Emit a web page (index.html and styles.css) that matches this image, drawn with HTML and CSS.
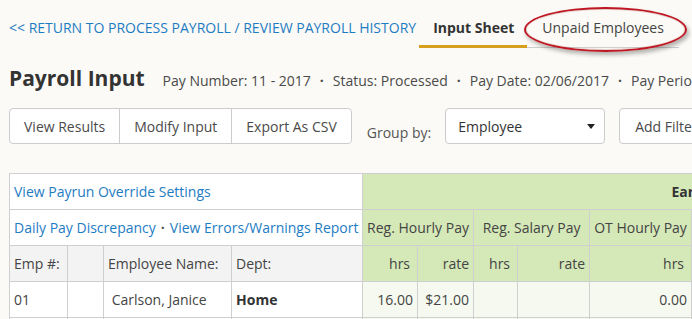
FILE: index.html
```html
<!DOCTYPE html>
<html>
<head>
<meta charset="utf-8">
<link rel="stylesheet" href="styles.css">
</head>
<body>
<div class="page">
  <div class="topbar">
    <a class="back" href="#">&lt;&lt; RETURN TO PROCESS PAYROLL / REVIEW PAYROLL HISTORY</a>
    <nav class="tabs">
      <a class="tab active" href="#">Input Sheet</a>
      <a class="tab" href="#">Unpaid Employees</a>
      <span class="annot"></span>
    </nav>
  </div>

  <div class="titlebar">
    <h1>Payroll Input</h1>
    <div class="meta">Pay Number: 11 - 2017<span class="sep">·</span>Status: Processed<span class="sep">·</span>Pay Date: 02/06/2017<span class="sep">·</span>Pay Period: 01/23/2017 - 02/05/2017</div>
  </div>

  <div class="toolbar">
    <div class="btn-group">
      <a class="btn" href="#">View Results</a>
      <a class="btn" href="#">Modify Input</a>
      <a class="btn" href="#">Export As CSV</a>
    </div>
    <span class="label">Group by:</span>
    <div class="select">Employee<span class="caret"></span></div>
    <a class="btn single" href="#">Add Filter</a>
  </div>

  <table class="grid">
    <colgroup>
      <col class="c-emp"><col class="c-blank"><col class="c-name"><col class="c-dept">
      <col class="c-h1"><col class="c-r1"><col class="c-h2"><col class="c-r2"><col class="c-h3">
      <col class="c-x"><col class="c-x"><col class="c-y">
    </colgroup>
    <tr>
      <td colspan="4" class="white"><a href="#">View Payrun Override Settings</a></td>
      <th colspan="8" class="green earn">Earnings</th>
    </tr>
    <tr>
      <td colspan="4" class="white"><a href="#">Daily Pay Discrepancy</a><span class="dot">·</span><a href="#">View Errors/Warnings Report</a></td>
      <th colspan="2" class="green">Reg. Hourly Pay</th>
      <th colspan="2" class="green">Reg. Salary Pay</th>
      <th class="green">OT Hourly Pay</th>
      <th colspan="2" class="green">OT Salary Pay</th>
      <th class="green">Bonus</th>
    </tr>
    <tr>
      <th class="gray">Emp #:</th>
      <th class="gray"></th>
      <th class="gray">Employee Name:</th>
      <th class="gray">Dept:</th>
      <th class="green num hrs">hrs</th>
      <th class="green num">rate</th>
      <th class="green num hrs">hrs</th>
      <th class="green num">rate</th>
      <th class="green num hrs">hrs</th>
      <th class="green num hrs">hrs</th>
      <th class="green num">rate</th>
      <th class="green num">amt</th>
    </tr>
    <tr>
      <td class="white">01</td>
      <td class="white"></td>
      <td class="white">&nbsp;Carlson, Janice</td>
      <td class="white"><b>Home</b></td>
      <td class="lg num">16.00</td>
      <td class="lg num">$21.00</td>
      <td class="lg num"></td>
      <td class="lg num"></td>
      <td class="lg num">0.00</td>
      <td class="lg num"></td>
      <td class="lg num"></td>
      <td class="lg num"></td>
    </tr>
    <tr>
      <td class="white">02</td>
      <td class="white"></td>
      <td class="white">&nbsp;Davis, Mark</td>
      <td class="white"><b>Home</b></td>
      <td class="lg num">40.00</td>
      <td class="lg num">$18.00</td>
      <td class="lg num"></td>
      <td class="lg num"></td>
      <td class="lg num">0.00</td>
      <td class="lg num"></td>
      <td class="lg num"></td>
      <td class="lg num"></td>
    </tr>
  </table>
</div>
</body>
</html>
```

FILE: styles.css
```css
html, body {
  margin: 0;
  padding: 0;
}
body {
  background: #fbfaf6;
  font-family: "Open Sans", "DejaVu Sans", sans-serif;
  font-size: 14px;
  color: #444;
  overflow: hidden;
  width: 692px;
  height: 319px;
}
a {
  text-decoration: none;
}
.page {
  padding: 8px 0 0 9px;
  white-space: nowrap;
}

/* top bar */
.topbar {
  display: flex;
  align-items: center;
  height: 40px;
}
.back {
  color: #1e7cc3;
  line-height: 18px;
}
.tabs {
  position: relative;
  display: flex;
  margin-left: 3px;
  height: 40px;
}
.tab {
  display: block;
  padding: 11px 15px 10px 15px;
  line-height: 18px;
  color: #444;
  border-bottom: 1px solid #cfcfcf;
}
.tab.active {
  font-weight: 700;
  color: #333;
  padding: 11px 13px 8px 14px;
  border-bottom: 3px solid #d6a01e;
}
.annot {
  position: absolute;
  left: 105px;
  top: -1px;
  width: 163px;
  height: 45px;
  box-sizing: border-box;
  border: 2px solid #be1722;
  border-radius: 50%;
  box-shadow: 2px 3px 4px rgba(0, 0, 0, 0.3), inset 0 0 0 1px rgba(120, 0, 0, 0.15);
}

/* title */
.titlebar {
  display: flex;
  align-items: baseline;
  margin-top: 16px;
}
.titlebar h1 {
  margin: 0;
  font-size: 21px;
  line-height: 28px;
  font-weight: 700;
  color: #333;
}
.meta {
  margin-left: 18px;
  color: #4a4a4a;
}
.sep {
  padding: 0 9px;
  font-weight: 700;
}

/* toolbar */
.toolbar {
  display: flex;
  height: 36px;
  margin-top: 16px;
}
.btn-group {
  display: flex;
  flex-shrink: 0;
  background: #fff;
  border: 1px solid #cccccc;
  border-radius: 4px;
}
.btn {
  display: flex;
  align-items: center;
  padding: 0 14px;
  color: #4a4a4a;
}
.btn-group .btn + .btn {
  border-left: 1px solid #cccccc;
}
.btn.single {
  flex-shrink: 0;
  margin-left: 14px;
  padding: 0 15px;
  background: #fff;
  border: 1px solid #cccccc;
  border-radius: 4px;
}
.label {
  flex-shrink: 0;
  align-self: flex-end;
  line-height: 20px;
  margin: 0 0 1px 15px;
  color: #555;
}
.select {
  flex-shrink: 0;
  display: flex;
  align-items: center;
  justify-content: space-between;
  box-sizing: border-box;
  width: 160px;
  margin-left: 14px;
  padding: 0 9px 0 12px;
  background: #fff;
  border: 1px solid #cccccc;
  border-radius: 4px;
  color: #333;
}
.caret {
  width: 0;
  height: 0;
  border-left: 4px solid transparent;
  border-right: 4px solid transparent;
  border-top: 5px solid #222;
}

/* table */
.grid {
  margin-top: 29px;
  border-collapse: collapse;
  table-layout: fixed;
  width: 1031px;
}
.c-emp { width: 58px; }
.c-blank { width: 36px; }
.c-name { width: 128px; }
.c-dept { width: 131px; }
.c-h1 { width: 55px; }
.c-r1 { width: 56px; }
.c-h2 { width: 44px; }
.c-r2 { width: 72px; }
.c-h3 { width: 102px; }
.c-x { width: 120px; }
.c-y { width: 109px; }
.grid td, .grid th {
  height: 35px;
  padding: 0 4px;
  border: 1px solid #cfcfcf;
  font-weight: 400;
  text-align: left;
  color: #444;
  overflow: hidden;
  white-space: nowrap;
}
.grid a {
  color: #1e7cc3;
}
.grid .white {
  background: #fff;
}
.grid .gray {
  background: #f3f3f3;
}
.grid .green {
  background: #d5e8b8;
  text-align: center;
}
.grid .lg {
  background: #f6f9ef;
}
.grid .num {
  text-align: right;
}
.grid .hrs {
  padding-right: 7px;
}
.grid .earn {
  font-weight: 700;
  color: #333;
}
.grid b {
  color: #333;
}
.dot {
  padding: 0 5px;
  color: #555;
  font-weight: 700;
}
```
